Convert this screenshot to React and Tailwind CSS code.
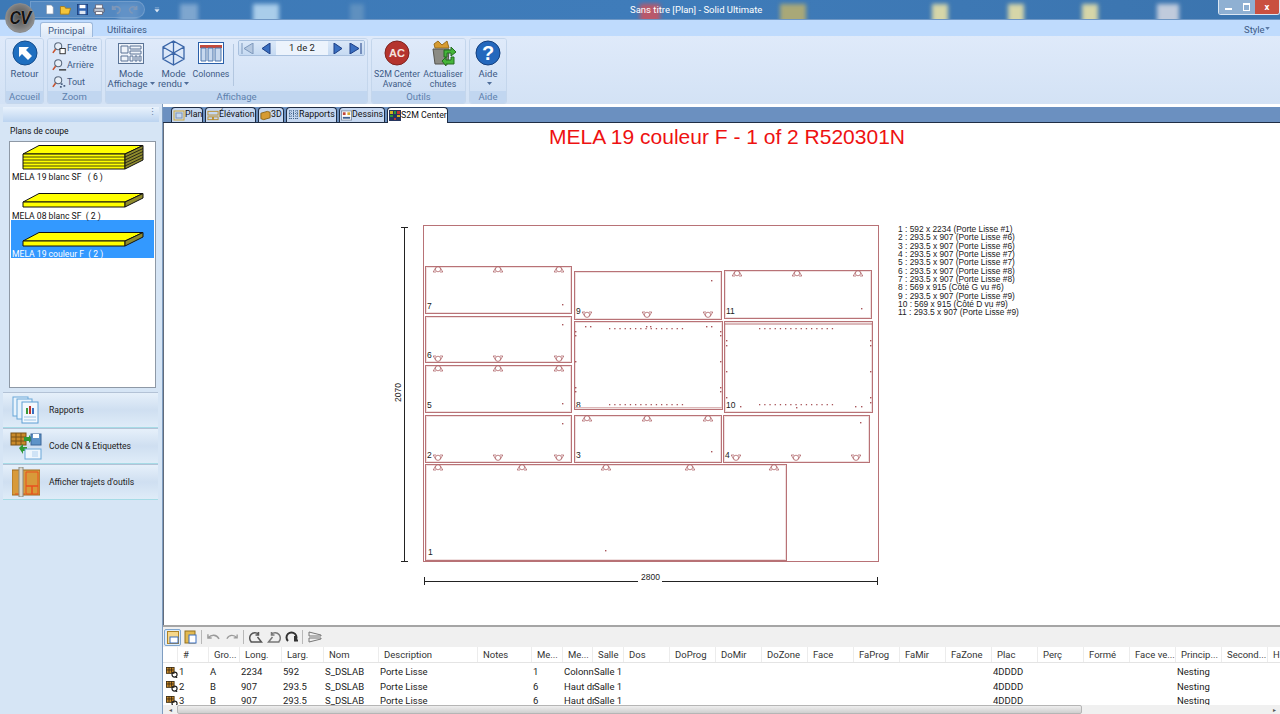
import React from 'react';

const columns = [
  ['#', 31], ['Gro...', 31], ['Long.', 42], ['Larg.', 42], ['Nom', 55], ['Description', 99], ['Notes', 54], ['Me...', 31], ['Me...', 30],
  ['Salle', 31], ['Dos', 46], ['DoProg', 46], ['DoMir', 46], ['DoZone', 46], ['Face', 46], ['FaProg', 46], ['FaMir', 46], ['FaZone', 46],
  ['Plac', 46], ['Perç', 46], ['Formé', 46], ['Face ve...', 46], ['Princip...', 46], ['Second...', 46], ['H', 20],
];

const rows = [
  ['1', 'A', '2234', '592', 'S_DSLAB', 'Porte Lisse', '', '1', 'Colonn', 'Salle 1'],
  ['2', 'B', '907', '293.5', 'S_DSLAB', 'Porte Lisse', '', '6', 'Haut dr', 'Salle 1'],
  ['3', 'B', '907', '293.5', 'S_DSLAB', 'Porte Lisse', '', '6', 'Haut dr', 'Salle 1'],
];

const legend = [
  '1 : 592 x 2234 (Porte Lisse #1)', '2 : 293.5 x 907 (Porte Lisse #6)', '3 : 293.5 x 907 (Porte Lisse #6)',
  '4 : 293.5 x 907 (Porte Lisse #7)', '5 : 293.5 x 907 (Porte Lisse #7)', '6 : 293.5 x 907 (Porte Lisse #8)',
  '7 : 293.5 x 907 (Porte Lisse #8)', '8 : 569 x 915 (Côté G vu #6)', '9 : 293.5 x 907 (Porte Lisse #9)',
  '10 : 569 x 915 (Côté D vu #9)', '11 : 293.5 x 907 (Porte Lisse #9)',
];

// piece rectangles on the sheet: x1, y1, x2, y2, number
const pieces = [
  [425, 266, 571, 313, '7', 427, 309], [425, 316, 571, 362, '6', 427, 358], [425, 365, 571, 412, '5', 427, 408],
  [425, 415, 571, 462, '2', 427, 458], [425, 464, 786, 560, '1', 428, 555], [574, 271, 721, 319, '9', 576, 314],
  [574, 321, 722, 409, '8', 576, 408], [574, 415, 721, 462, '3', 576, 458], [724, 270, 871, 318, '11', 726, 314],
  [724, 321, 872, 412, '10', 726, 408], [723, 415, 869, 462, '4', 725, 458],
];

const marksUp = [
  [438, 269], [498, 269], [559, 269], [438, 368], [498, 368], [559, 368], [438, 467], [522, 467], [606, 467], [690, 467], [774, 467],
  [587, 418], [647, 418], [708, 418], [737, 273], [797, 273], [858, 273],
];
const marksDown = [
  [438, 359], [498, 359], [559, 359], [438, 458], [498, 458], [559, 458], [587, 315], [647, 315], [708, 315], [736, 458], [796, 458], [856, 458],
];
const specks = [
  [562, 304], [562, 324], [562, 403], [562, 423], [711, 280], [711, 451], [861, 308], [605, 550], [860, 422],
  [585, 326], [590, 326], [706, 326], [711, 326], [646, 326], [650, 326], [575, 331], [575, 335], [575, 361], [575, 387], [575, 391],
  [720, 331], [720, 335], [720, 361], [720, 387], [720, 391], [726, 340], [726, 345], [726, 371], [726, 397], [870, 340], [870, 345],
  [870, 371], [870, 397], [870, 402], [740, 406], [855, 406], [861, 406], [796, 407],
];
const dotsX = (start) => Array.from({ length: 15 }, (_, i) => start + i * 5.2);

function Mark({ x, y, down }) {
  return (
    <g transform={`translate(${x} ${y})${down ? ' scale(1 -1)' : ''}`} fill="none" stroke="#b0666a" strokeWidth="0.8">
      <circle cy="0.2" r="2.6" />
      <path d="M-2.200 -1.400L-4.800 3H-2M2.200 -1.400L4.800 3H2" />
    </g>
  );
}

function SheetDrawing() {
  return (
    <svg className="absolute inset-0" width="1116" height="521" viewBox="164 123 1116 521">
      <rect x="423.5" y="225.500" width="455" height="336" fill="none" stroke="#b87276" />
      {pieces.map(([x1, y1, x2, y2, n, tx, ty]) => (
        <g key={n}>
          <rect x={x1 + 0.5} y={y1 + 0.5} width={x2 - x1} height={y2 - y1} fill="#fff" stroke="#b87276" />
          <rect x={x1 + 1.5} y={y1 + 1.5} width={x2 - x1 - 2} height={y2 - y1 - 2} fill="none" stroke="#f0e0e0" />
          <text x={tx} y={ty} fontSize="8.5" fontFamily="Liberation Sans" fill="#222">{n}</text>
        </g>
      ))}
      <path d="M725 324H872" stroke="#b87276" />
      <path d="M575 407.500H722" stroke="#dcb8b8" />
      {marksUp.map(([x, y]) => <Mark key={`u${x}${y}`} x={x} y={y} />)}
      {marksDown.map(([x, y]) => <Mark key={`d${x}${y}`} x={x} y={y} down />)}
      {specks.map(([x, y]) => <rect key={`s${x}${y}`} x={x} y={y} width="1.400" height="1.400" fill="#a9565b" />)}
      {[[609, 328], [609, 404], [759, 328], [759, 404]].map(([sx, y]) =>
        dotsX(sx).map((x) => <rect key={`${x}${y}`} x={x} y={y} width="1.300" height="1.300" fill="#a9565b" />)
      )}
      <g stroke="#222" fill="none">
        <path d="M404.500 227V561M401 227.500H408M401 561.500H408" />
        <path d="M424.500 577V585M424.500 581.500H878M877.500 577V585" />
      </g>
      <rect x="394" y="381" width="10" height="24" fill="#fff" />
      <text x="401" y="402" fontSize="8.5" fontFamily="Liberation Sans" fill="#222" transform="rotate(-90 401 402)">2070</text>
      <rect x="638" y="573" width="24" height="10" fill="#fff" />
      <text x="641" y="580" fontSize="8.5" fontFamily="Liberation Sans" fill="#222">2800</text>
    </svg>
  );
}

function Stack({ peak, mid, bottom, lines }) {
  const h = bottom - mid;
  return (
    <svg className="absolute left-[22px]" style={{ top: peak }} width="122" height={bottom - peak + 2} viewBox={`22 ${peak} 122 ${bottom - peak + 2}`}>
      <path d={`M23 ${mid}L39 ${peak + 0.5}H143L125 ${mid}Z`} fill="#ffff00" stroke="#111" />
      <path d={`M23 ${mid}H125V${bottom}H23Z`} fill="#ffff00" stroke="#111" />
      <path d={`M125 ${mid}L143 ${peak + 0.5}V${peak + h}L125 ${bottom}Z`} fill="#8f8b2c" stroke="#111" />
      {lines.map((l) => <path key={l} d={`M23 ${mid + l}H125L143 ${peak + 0.5 + l}`} fill="none" stroke="#111" strokeWidth="0.8" />)}
    </svg>
  );
}

function Tab({ label, active, icon, width }) {
  return (
    <div className={`flex items-center shrink-0 h-[15px] border border-b-0 border-[#1f2d44] rounded-t-sm px-px text-[8.8px] text-[#111] whitespace-nowrap ${active ? 'bg-white -mb-px h-[16px]' : 'bg-[#c6d8f1]'}`} style={{ width }}>
      {icon}
      <span>{label}</span>
    </div>
  );
}

function RibbonGroup({ label, width, children }) {
  return (
    <div className="flex flex-col rounded-[3px] border border-[#c4d6ec] overflow-hidden" style={{ width }}>
      <div className="relative h-[52px] bg-gradient-to-b from-[#dfeafa] to-[#d1e1f5]">{children}</div>
      <div className="h-[12px] leading-[12px] text-center bg-[#c1d6f0] text-[#5d80ad]">{label}</div>
    </div>
  );
}

function Caret() {
  return <svg className="inline-block ml-[2px] mb-[1px]" width="5" height="3" viewBox="0 0 5 3"><path d="M0 0H5L2.500 3Z" fill="#4f6d99" /></svg>;
}

function RibbonButton({ left, width, icon, lines, caret, narrow }) {
  return (
    <div className={`absolute top-0 flex flex-col items-center text-[#3d5a85] leading-[10px] ${narrow ? 'text-[8.8px]' : ''}`} style={{ left, width }}>
      <div className="h-[30px] pb-[2px] flex items-center justify-center">{icon}</div>
      {lines.map((l, i) => (
        <span key={i} className="whitespace-nowrap">{l}{caret && i === lines.length - 1 && <Caret />}</span>
      ))}
    </div>
  );
}

function Magnifier({ kind }) {
  return (
    <svg width="15" height="14" viewBox="0 0 17 15" fill="none">
      <circle cx="7" cy="5.500" r="4" fill="#e7eef7" stroke="#5b6b80" strokeWidth="1.200" />
      <path d="M4 9L1 13" stroke="#c8502a" strokeWidth="1.800" />
      {kind === 'window' && <rect x="9" y="8" width="6" height="6" fill="#fff" stroke="#222" />}
      {kind === 'back' && <path d="M8 13H16" stroke="#222" strokeWidth="1.200" />}
      {kind === 'all' && <path d="M10 9h2v2h-2zM13 11h2v2h-2zM9 12h2v2H9z" fill="#4a5f80" />}
    </svg>
  );
}

function NavButton({ children, width }) {
  return (
    <div className="h-full flex items-center justify-center bg-gradient-to-b from-[#dbe8f8] to-[#c6daf2]" style={{ width }}>
      {children}
    </div>
  );
}

function SideButton({ label, icon }) {
  return (
    <div className="flex items-center ml-[3px] w-[155px] h-[36px] border-t border-[#b3c2d6] border-b border-b-[#a6dbe6] bg-gradient-to-b from-[#e6f0fa] via-[#cfdff1] to-[#dfecf8] text-[#222]">
      <div className="w-[46px] flex justify-center">{icon}</div>
      <span className="mt-px">{label}</span>
    </div>
  );
}

function GridIcon() {
  return (
    <svg className="shrink-0" width="12" height="11" viewBox="0 0 14 13">
      <rect x="0.500" y="0.500" width="9" height="7" fill="#c98a2a" stroke="#3a2a10" />
      <path d="M0 3.500H9M3.500 0V7M6.500 0V7" stroke="#3a2a10" />
      <circle cx="10" cy="9" r="3" fill="none" stroke="#222" strokeWidth="1.400" />
      <path d="M11 11L13 13" stroke="#222" strokeWidth="1.400" />
    </svg>
  );
}

export default function App() {
  return (
    <div className="relative w-[1280px] h-[714px] overflow-hidden flex flex-col bg-[#d6e5f5] text-[9.5px] [font-family:Roboto,'Liberation_Sans',sans-serif]">
      {/* title bar */}
      <div className="relative h-[19px] shrink-0 bg-gradient-to-r from-[#3d79b6] via-[#3f7cba] to-[#3b74ae] overflow-hidden">
        {[[118, 20, '#6f9ccb'], [180, 18, '#7ea6cf'], [253, 26, '#a9cdea'], [350, 14, '#5f90bf'], [640, 20, '#b9586a'], [780, 26, '#a9a878'], [932, 16, '#d6d6a8'], [1008, 16, '#d6d6a8'], [1082, 16, '#d6d6a8'], [1157, 22, '#c0cbdc']].map(([x, w, c]) => (
          <div key={x} className="absolute top-[4px] h-[20px] blur-[2px]" style={{ left: x, width: w, background: c }} />
        ))}
        <div className="absolute left-[30px] top-[1px] w-[115px] h-[17px] rounded-r-full bg-[#5d8ec4]/70 border border-[#8db0d6]/50" />
        <span className="absolute left-[630px] top-[4px] text-white leading-[11px]">Sans titre [Plan] - Solid Ultimate</span>
        <div className="absolute right-0 top-0 flex items-start h-[15px] border border-[#dbe6f2] border-t-0 rounded-b-[3px] overflow-hidden">
          <div className="w-[18px] h-[14px] bg-[#8fb0d2] flex items-center justify-center"><div className="w-[7px] h-[2px] mt-[4px] bg-white" /></div>
          <div className="w-[18px] h-[14px] bg-[#8fb0d2] flex items-center justify-center"><div className="w-[7px] h-[8px] border border-white border-t-2" /></div>
          <div className="w-[24px] h-[14px] bg-[#c9503f] flex items-center justify-center text-white font-bold leading-none">x</div>
        </div>
      </div>

      {/* quick access icons and logo */}
      <div className="absolute left-[45px] top-[4px] flex items-center">
        <svg width="9" height="11" viewBox="0 0 13 14"><path d="M2 .5H9L12 3.500V13.500H2Z" fill="#fff" stroke="#7b8ea8" /></svg>
        <svg className="ml-[5px]" width="13" height="11" viewBox="0 0 14 13"><path d="M1 3H6L7 5H13L11 12H1Z" fill="#f4c53a" stroke="#a87a14" /><path d="M6 3L10 0L12 4" fill="#4a87c7" /></svg>
        <svg className="ml-[5px]" width="11" height="11" viewBox="0 0 13 13"><rect x=".5" y=".5" width="12" height="12" fill="#2f63b0" stroke="#1d3f7a" /><rect x="3" y="1" width="7" height="4" fill="#fff" /><rect x="3" y="8" width="7" height="4" fill="#dfe7f2" /></svg>
        <svg className="ml-[5px]" width="12" height="11" viewBox="0 0 14 13"><rect x="3" y="1" width="8" height="5" fill="#fff" stroke="#667" /><rect x="1" y="5" width="12" height="5" rx="1" fill="#b9c2cf" stroke="#556" /><rect x="3" y="9" width="8" height="3.500" fill="#fff" stroke="#667" /></svg>
        <svg className="ml-[5px]" width="12" height="11" viewBox="0 0 14 13" fill="none"><path d="M3 2V6H7M3 6C5 2 10 2 12 6C12 9 10 11 8 11" stroke="#7e97b8" strokeWidth="2" /></svg>
        <svg className="ml-[6px]" width="11" height="11" viewBox="0 0 14 13" fill="none"><path d="M11 2V6H7M11 6C9 2 4 2 2 6C2 9 4 11 6 11" stroke="#7e97b8" strokeWidth="2" /></svg>
        <svg className="ml-[15px]" width="6" height="6" viewBox="0 0 7 7"><path d="M1 1H6M1 3H6L3.500 6Z" fill="#dfe9f5" stroke="#dfe9f5" strokeWidth=".5" /></svg>
      </div>
      <div className="absolute left-[5px] top-[3px] z-10 w-[30px] h-[30px] rounded-full bg-[radial-gradient(circle_at_50%_45%,#4d4d4d,#7d7d7d_55%,#b5b5b5)] border border-[#8b8b8b] flex items-center justify-center">
        <span className="text-[#141414] font-bold text-[18px] italic leading-none tracking-[-1px] [text-shadow:0_0_1px_#ddd]">CV</span>
      </div>

      {/* ribbon tabs */}
      <div className="relative h-[17px] shrink-0 bg-[#bfdbfd] border-t border-[#6f97c4] text-[#3d5a85]">
        <div className="absolute left-[40px] top-[2px] w-[53px] h-[15px] leading-[15px] text-center bg-gradient-to-b from-[#f2f7fd] to-[#dde9f8] border border-b-0 border-[#9db9dc] rounded-t-[3px]">Principal</div>
        <span className="absolute left-[107px] top-[3px] leading-[13px]">Utilitaires</span>
        <span className="absolute left-[1244px] top-[3px] leading-[13px]">Style</span>
        <svg className="absolute left-[1265px] top-[7px]" width="5" height="3" viewBox="0 0 6 4"><path d="M0 0H6L3 4Z" fill="#5d7ba6" /></svg>
      </div>

      {/* ribbon */}
      <div className="h-[68px] shrink-0 flex gap-[3px] pl-[5px] pt-[2px] bg-gradient-to-b from-[#dfeafa] to-[#d3e2f5]">
        <RibbonGroup label="Accueil" width={39}>
          <RibbonButton left={0} width={37} lines={['Retour']} icon={
            <svg width="26" height="26" viewBox="0 0 26 26">
              <circle cx="13" cy="13" r="12" fill="#1f6fc0" stroke="#164d8c" />
              <path d="M7 7H17L14 10L20 16L16 20L10 14L7 17Z" fill="#fff" />
            </svg>
          } />
        </RibbonGroup>
        <RibbonGroup label="Zoom" width={55}>
          <div className="absolute left-[4px] top-[1px] flex flex-col gap-px text-[9px] text-[#3d5a85] leading-[16px]">
            <div className="flex items-center h-[16px]"><Magnifier kind="window" /><span>Fenêtre</span></div>
            <div className="flex items-center h-[16px]"><Magnifier kind="back" /><span>Arrière</span></div>
            <div className="flex items-center h-[16px]"><Magnifier kind="all" /><span>Tout</span></div>
          </div>
        </RibbonGroup>
        <RibbonGroup label="Affichage" width={263}>
          <RibbonButton left={2} width={46} lines={['Mode', 'Affichage']} caret icon={
            <svg width="26" height="21" viewBox="0 0 26 21" fill="none" stroke="#5a7396">
              <rect x=".5" y=".5" width="25" height="20" fill="#eef3fa" />
              <path d="M3 3H10V10H3ZM12 3H23V6H12ZM12 8H23V11H12ZM3 13H10V18H3ZM12 13H15V18H12ZM17 13H19V18H17ZM21 13H23V18H21Z" />
            </svg>
          } />
          <RibbonButton left={46} width={43} lines={['Mode', 'rendu']} caret icon={
            <svg width="23" height="26" viewBox="0 0 23 26" fill="none" stroke="#3b66a8" strokeWidth="1.300">
              <path d="M11.500 1L22 7V19L11.500 25L1 19V7ZM1 7L11.500 13L22 7M11.500 13V25M11.500 1V13M1 19L11.500 13L22 19" />
            </svg>
          } />
          <RibbonButton narrow left={85} width={40} lines={['Colonnes']} icon={
            <svg width="26" height="22" viewBox="0 0 26 22">
              <rect x=".5" y=".5" width="25" height="21" fill="#fff" stroke="#2a5fa8" />
              <rect x="2" y="3" width="22" height="3" fill="#c44a3c" />
              <path d="M3 6H8V19H3ZM10 6H15V19H10ZM17 6H23V19H17Z" fill="#c7d8ee" stroke="#4b74ab" />
            </svg>
          } />
          <div className="absolute left-[127px] top-[5px] w-px h-[42px] bg-[#b3c7e0]" />
          <div className="absolute left-[132px] top-[1px] flex h-[16px] border border-[#a8c0de] rounded-[2px] overflow-hidden">
            <NavButton width={17}><svg width="13" height="11" viewBox="0 0 13 11"><path d="M1 0V11M12 0V11L3 5.500Z" fill="#b5c8e0" stroke="#7c97bb" /></svg></NavButton>
            <NavButton width={20}><svg width="10" height="11" viewBox="0 0 10 11"><path d="M9 0V11L1 5.500Z" fill="#3a6fc0" stroke="#1d3f86" /></svg></NavButton>
            <div className="w-[52px] bg-[#ecf3fc] text-center leading-[14px] text-[#222]">1 de 2</div>
            <NavButton width={19}><svg width="10" height="11" viewBox="0 0 10 11"><path d="M1 0V11L9 5.500Z" fill="#3a6fc0" stroke="#1d3f86" /></svg></NavButton>
            <NavButton width={17}><svg width="13" height="11" viewBox="0 0 13 11"><path d="M12 0V11M1 0V11L10 5.500Z" fill="#3a6fc0" stroke="#1d3f86" /></svg></NavButton>
          </div>
        </RibbonGroup>
        <RibbonGroup label="Outils" width={95}>
          <RibbonButton narrow left={1} width={48} lines={['S2M Center', 'Avancé']} icon={
            <svg width="26" height="26" viewBox="0 0 26 26">
              <circle cx="13" cy="13" r="12" fill="#b5342e" stroke="#7f2420" />
              <text x="13" y="17" textAnchor="middle" fontSize="11" fontWeight="bold" fontFamily="Liberation Sans" fill="#f4e4e0">AC</text>
            </svg>
          } />
          <RibbonButton narrow left={49} width={44} lines={['Actualiser', 'chutes']} icon={
            <svg width="26" height="26" viewBox="0 0 26 26">
              <path d="M4 4L8 1L12 5L17 1L19 8H5Z" fill="#d69b32" stroke="#9a6e1e" />
              <path d="M3 9H19L18 24H5Z" fill="#8b8b84" stroke="#55554f" />
              <path d="M14 10H21V7L26 12L21 16V13H17V17H14Z" fill="#45b53a" stroke="#256c20" />
              <path d="M24 24H16V26L12 21L16 17V20H21V17H24Z" fill="#45b53a" stroke="#256c20" />
            </svg>
          } />
        </RibbonGroup>
        <RibbonGroup label="Aide" width={38}>
          <RibbonButton left={0} width={36} lines={['Aide', '']} caret icon={
            <svg width="26" height="26" viewBox="0 0 26 26">
              <circle cx="13" cy="13" r="12" fill="#2468bd" stroke="#153f7c" />
              <text x="13" y="20" textAnchor="middle" fontSize="20" fontWeight="bold" fontFamily="Liberation Sans" fill="#fff">?</text>
            </svg>
          } />
        </RibbonGroup>
      </div>

      <div className="flex flex-1 min-h-0">
        {/* left panel */}
        <div className="w-[163px] shrink-0 flex flex-col border-r border-[#7f9dc0] text-[8.6px]">
          <div className="h-[3px] bg-[#d9e6f6]" />
          <div className="h-[15px] mx-[3px] bg-gradient-to-b from-[#e9f2fc] to-[#bcd4f0] text-right pr-[2px] leading-[11px] text-[#6d86a8]">⋮</div>
          <div className="pl-[10px] pt-[3px] leading-[12px] h-[19px] text-[#111]">Plans de coupe</div>
          <div className="relative ml-[9px] w-[147px] h-[247px] bg-white border border-[#8e99a6] text-[#111]">
            <div className="absolute left-[1px] top-[78px] w-[143px] h-[38px] bg-[#3399ff]" />
            <span className="absolute left-[2px] top-[29px] whitespace-pre">MELA 19 blanc SF   ( 6 )</span>
            <span className="absolute left-[2px] top-[68px] whitespace-pre">MELA 08 blanc SF  ( 2 )</span>
            <span className="absolute left-[2px] top-[106px] whitespace-pre text-white">MELA 19 couleur F  ( 2 )</span>
          </div>
          <div className="h-[4px]" />
          <SideButton label="Rapports" icon={
            <svg width="28" height="28" viewBox="0 0 28 28">
              <rect x="1" y="1" width="15" height="19" fill="#e8f3fc" stroke="#6aa7d8" />
              <rect x="5" y="3" width="15" height="20" fill="#e8f3fc" stroke="#6aa7d8" />
              <rect x="10" y="6" width="16" height="21" fill="#f2f8fe" stroke="#5f9fd4" />
              <rect x="14" y="12" width="2" height="6" fill="#3a9a3a" /><rect x="17" y="10" width="2" height="8" fill="#c2362e" /><rect x="20" y="12" width="2" height="6" fill="#3a6fc0" />
              <path d="M12 21H24M12 24H24" stroke="#9cc4e6" />
            </svg>
          } />
          <SideButton label="Code CN & Etiquettes" icon={
            <svg width="32" height="28" viewBox="0 0 32 28">
              <rect x="1" y="1" width="15" height="12" fill="#c98a2a" stroke="#7a5216" />
              <path d="M1 5H16M1 9H16M6 1V13M11 1V13" stroke="#7a5216" />
              <path d="M14 5H19V3L23 7L19 11V9H14Z" fill="#2f9a34" />
              <rect x="21" y="2" width="10" height="11" fill="#5e93c8" stroke="#3a6699" /><rect x="23" y="2" width="6" height="4" fill="#fff" />
              <path d="M9 16L13 12L13 15H17V19H13V22Z" fill="#2f9a34" />
              <rect x="15" y="17" width="16" height="10" fill="#eef6fd" stroke="#6aa7d8" /><rect x="22" y="19" width="6" height="6" fill="#cfe3f6" />
            </svg>
          } />
          <SideButton label="Afficher trajets d'outils" icon={
            <svg width="28" height="30" viewBox="0 0 28 30">
              <rect x="0" y="3" width="28" height="25" fill="#d89a3a" stroke="#a06a1c" />
              <path d="M14 5H26V19H14ZM14 19H20V27H14ZM20 19H26V27H20Z" fill="none" stroke="#e8501e" />
              <path d="M3 27H13" stroke="#e8501e" />
              <rect x="7" y="0" width="4" height="30" fill="#d8d8d0" stroke="#8a8a80" />
            </svg>
          } />
        </div>

        {/* right side */}
        <div className="flex-1 min-w-0 flex flex-col bg-white">
          <div className="h-[16px] mt-[3px] shrink-0 flex items-end gap-[2px] pl-[8px] bg-[#6b90c0] border-b border-[#1f2d44]">
            <Tab width={32} label="Plan" icon={<svg className="shrink-0" width="12" height="11" viewBox="0 0 12 11" fill="none" stroke="#d0a93c"><rect x="1" y="1" width="10" height="9" /><rect x="3" y="3" width="6" height="5" stroke="#7f96b4" /></svg>} />
            <Tab width={51} label="Élévation" icon={<svg className="shrink-0" width="12" height="11" viewBox="0 0 13 11" fill="none" stroke="#b98d2e"><rect x="1" y="1" width="11" height="4" /><rect x="1" y="7" width="5" height="3" /><rect x="7" y="7" width="5" height="3" /></svg>} />
            <Tab width={26} label="3D" icon={<svg className="shrink-0" width="11" height="11" viewBox="0 0 12 11"><path d="M1 3L8 1L11 2V8L4 10L1 9Z" fill="#d69b32" stroke="#8a6418" /></svg>} />
            <Tab width={51} label="Rapports" icon={<svg className="shrink-0" width="11" height="11" viewBox="0 0 11 11"><path d="M1 1H10M1 3.500H10M1 6H10M1 8.500H10M2 0V10M5.500 0V10M9 0V10" stroke="#47698f" strokeDasharray="1 1" /></svg>} />
            <Tab width={46} label="Dessins" icon={<svg className="shrink-0" width="11" height="11" viewBox="0 0 12 11"><rect x=".5" y=".5" width="11" height="10" fill="#fff" stroke="#7f8fa5" /><rect x="2" y="2" width="3" height="3" fill="#c2463a" /><rect x="7" y="2" width="3" height="3" fill="#d6a52e" /><rect x="2" y="7" width="8" height="2" fill="#3d5f90" /></svg>} />
            <Tab width={61} active label="S2M Center" icon={<svg className="shrink-0" width="12" height="11" viewBox="0 0 12 11"><rect width="12" height="11" fill="#27365f" /><rect x="1" y="1" width="3" height="3" fill="#d6b11f" /><rect x="5" y="1" width="2" height="3" fill="#2f9a34" /><rect x="8" y="1" width="3" height="3" fill="#c2362e" /><rect x="1" y="5" width="3" height="2" fill="#2f9a34" /><rect x="8" y="5" width="3" height="2" fill="#d6b11f" /><rect x="5" y="8" width="2" height="2" fill="#c2362e" /></svg>} />
          </div>

          <div className="relative h-[502px] shrink-0 bg-white border-l border-[#1f2d44]/70">
            <h1 className="pt-[2px] pl-[10px] text-center text-[21px] leading-[23px] font-normal text-[#ee1111] whitespace-nowrap [font-family:'Liberation_Sans',sans-serif]">MELA 19 couleur F - 1 of 2 R520301N</h1>
            <SheetDrawing />
            <div className="absolute left-[734px] top-[102px] text-[8.4px] leading-[8.35px] text-[#222] whitespace-nowrap [font-family:'Liberation_Sans',sans-serif]">
              {legend.map((l) => <div key={l}>{l}</div>)}
            </div>
          </div>

          {/* cut list */}
          <div className="flex-1 min-h-0 relative flex flex-col border-t-2 border-[#a5a5a5] bg-white overflow-hidden">
            <div className="h-[20px] shrink-0 bg-[#f0f0f0] flex items-center pl-[1px]">
              <div className="w-[17px] h-[17px] border border-[#7fa6cf] bg-[#dcecfb] rounded-[2px] flex items-center justify-center">
                <svg width="12" height="13" viewBox="0 0 12 13"><rect x=".5" y=".5" width="11" height="12" fill="#f6d78a" stroke="#b08326" /><rect x="3" y="6" width="8" height="6" fill="#fff" stroke="#3a6fc0" /></svg>
              </div>
              <svg className="ml-[3px]" width="13" height="14" viewBox="0 0 13 14"><rect x="1" y="1" width="10" height="12" fill="#e3b94f" stroke="#93701f" /><rect x="5" y="5" width="7" height="8" fill="#fff" stroke="#3a6fc0" /></svg>
              <div className="w-px h-[14px] bg-[#b8b8b8] ml-[4px]" />
              <svg className="ml-[5px]" width="13" height="11" viewBox="0 0 14 11" fill="none" stroke="#9a9a9a" strokeWidth="1.500"><path d="M1 2V6H5M1 6C5 2 10 2 13 7" /></svg>
              <svg className="ml-[6px]" width="12" height="11" viewBox="0 0 14 11" fill="none" stroke="#9a9a9a" strokeWidth="1.500"><path d="M13 2V6H9M13 6C9 2 4 2 1 7" /></svg>
              <div className="w-px h-[14px] bg-[#b8b8b8] ml-[5px]" />
              <svg className="ml-[5px]" width="14" height="13" viewBox="0 0 13 13" fill="none" stroke="#555" strokeWidth="1.500"><path d="M2 11A5 5 0 0 1 9 3M9 1V4H6M1 11H12L8 6" /></svg>
              <svg className="ml-[4px]" width="14" height="13" viewBox="0 0 13 13" fill="none" stroke="#777" strokeWidth="1.500"><path d="M11 11A5 5 0 0 0 4 3M4 1V4H7M12 11H1L5 6" /></svg>
              <svg className="ml-[4px]" width="13" height="13" viewBox="0 0 13 13" fill="none" stroke="#333" strokeWidth="2"><path d="M3 10A5 5 0 1 1 10 10M10 5V9.500H13" /></svg>
              <div className="w-px h-[14px] bg-[#b8b8b8] ml-[4px]" />
              <svg className="ml-[5px]" width="14" height="12" viewBox="0 0 14 12" fill="none" stroke="#777"><path d="M1 1L13 4V5H1ZM1 7H13V8L1 11Z" /></svg>
            </div>
            <div className="h-[16px] shrink-0 flex items-center pl-[14px] border-b border-[#e4e4e4] bg-white text-[#333] whitespace-nowrap">
              {columns.map(([name, w], i) => (
                <div key={i} className="shrink-0 h-full pl-[5px] leading-[16px] border-l border-[#ececec]" style={{ width: w }}>{name}</div>
              ))}
            </div>
            <div className="flex-1 pt-[2px] pl-[3px] text-[#222] whitespace-nowrap overflow-hidden">
              {rows.map((r) => (
                <div key={r[0]} className="relative flex items-center h-[14.5px]">
                  <GridIcon />
                  <div className="flex">
                    {r.map((c, i) => (
                      <div key={i} className="shrink-0 pl-px" style={{ width: columns[i][1] }}>{c}</div>
                    ))}
                  </div>
                  <span className="absolute left-[827px]">4DDDD</span>
                  <span className="absolute left-[1011px]">Nesting</span>
                </div>
              ))}
            </div>
            <div className="absolute left-0 right-0 bottom-0 h-[9px] bg-[#f0f0f0] flex items-center">
              <span className="w-[14px] text-[6px] text-center text-[#555]">◂</span>
              <div className="w-[905px] h-[9px] bg-gradient-to-b from-[#eeeeee] to-[#cfcfcf] border border-[#b5b5b5] rounded-[2px]" />
              <span className="ml-auto w-[12px] text-[6px] text-center text-[#555]">▸</span>
            </div>
          </div>
        </div>
      </div>

      {/* stacked sheet thumbnails */}
      <Stack peak={145} mid={154} bottom={169} lines={[3, 6, 9, 12]} />
      <Stack peak={193} mid={202} bottom={207} lines={[]} />
      <Stack peak={232} mid={241} bottom={246} lines={[]} />
    </div>
  );
}
